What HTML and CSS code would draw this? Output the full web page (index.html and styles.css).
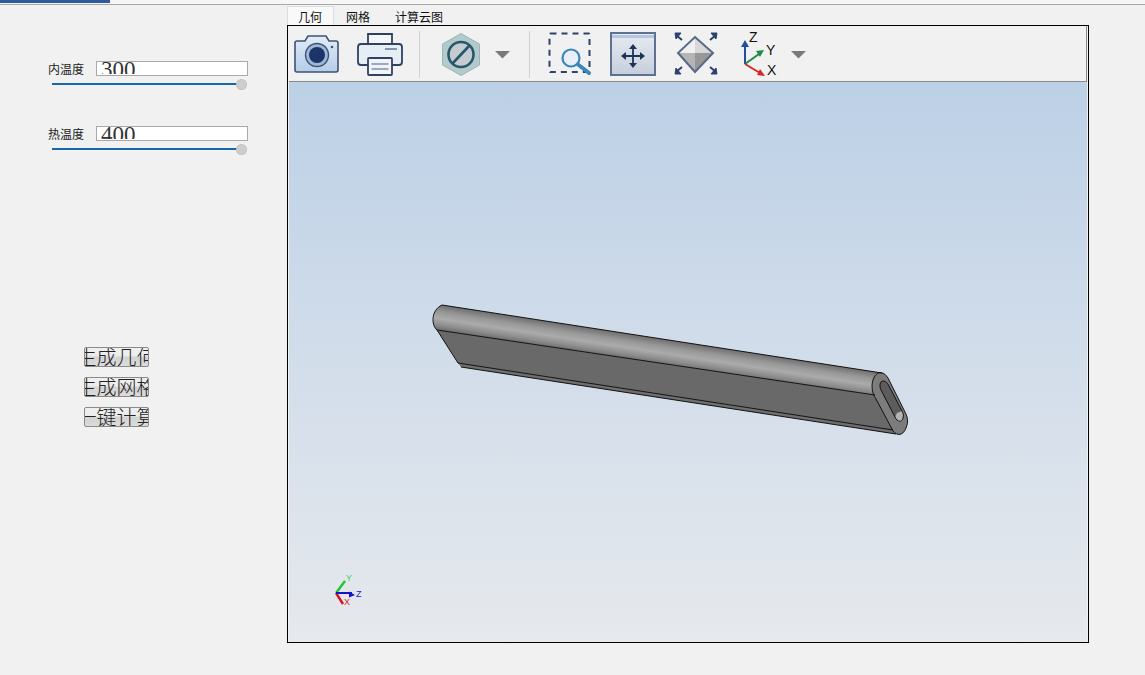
FILE: index.html
```html
<!DOCTYPE html>
<html lang="zh">
<head>
<meta charset="utf-8">
<title>几何</title>
<link rel="stylesheet" href="styles.css">
</head>
<body>
<div class="topbar"><div class="progress"></div></div>
<div class="main">
  <aside class="side">
    <div class="group">
      <div class="field"><span class="label">内温度</span><div class="value"><span class="value-text">300</span></div></div>
      <div class="slider"><div class="thumb"></div></div>
    </div>
    <div class="group">
      <div class="field"><span class="label">热温度</span><div class="value"><span class="value-text">400</span></div></div>
      <div class="slider"><div class="thumb"></div></div>
    </div>
    <div class="actions">
      <div class="btn"><span>生成几何</span></div>
      <div class="btn"><span>生成网格</span></div>
      <div class="btn"><span>一键计算</span></div>
    </div>
  </aside>
  <section class="work">
    <div class="tabs">
      <div class="tab tab-active">几何</div>
      <div class="tab">网格</div>
      <div class="tab tab-last">计算云图</div>
    </div>
    <div class="frame">
      <div class="toolbar">
        <svg width="57" height="50" viewBox="292 28 57 50">
          <defs><linearGradient id="cam" x1="0" y1="0" x2="0" y2="1"><stop offset="0" stop-color="#e2ecf7"/><stop offset="1" stop-color="#b4cde8"/></linearGradient></defs>
          <path d="M297 41h8l3-5h18l3 5h7a2 2 0 0 1 2 2v27a2 2 0 0 1-2 2h-39a2 2 0 0 1-2-2v-27a2 2 0 0 1 2-2z" fill="url(#cam)" stroke="#3f5272" stroke-width="1.6"/>
          <circle cx="317" cy="55" r="11.5" fill="#9db8d8" stroke="#3f5272" stroke-width="1.4"/>
          <circle cx="317" cy="55" r="8" fill="#1c3468"/>
          <circle cx="332" cy="47" r="1.3" fill="#3f5272"/>
        </svg>
        <svg width="61" height="50" viewBox="349 28 61 50">
          <path d="M368 44V34h24v10" fill="#f4f6f9" stroke="#2f4262" stroke-width="1.8"/>
          <path d="M361 44h38a3 3 0 0 1 3 3v15a3 3 0 0 1-3 3h-38a3 3 0 0 1-3-3v-15a3 3 0 0 1 3-3z" fill="#e6edf5" stroke="#2f4262" stroke-width="1.8"/>
          <path d="M385 49h12" stroke="#8194ad" stroke-width="2"/>
          <rect x="368" y="58" width="24" height="17" rx="1" fill="#f0f4f9" stroke="#2f4262" stroke-width="1.8"/>
          <path d="M371.500 64h17M371.500 69h17" stroke="#7e90a8" stroke-width="1.6"/>
        </svg>
        <div class="sep"></div>
        <svg width="59" height="50" viewBox="428 28 59 50">
          <path d="M461 33.500l18.500 10.500v21L461 75.500 442.500 65V44z" fill="#b3c9cb" stroke="#9ab6b9" stroke-width="1"/>
          <circle cx="461" cy="54.500" r="12.500" fill="#c4ccd2" stroke="#26586a" stroke-width="2.600"/>
          <path d="M452.500 63.500l17-18" stroke="#26586a" stroke-width="2.600"/>
        </svg>
        <svg class="caret" width="33" height="50" viewBox="487 28 33 50"><path d="M495 51h15l-7.500 7.500z" fill="#7a7a7a"/></svg>
        <div class="sep"></div>
        <svg width="63" height="50" viewBox="538 28 63 50">
          <rect x="549.500" y="33.500" width="40" height="38.500" rx="1" fill="none" stroke="#2d4468" stroke-width="2" stroke-dasharray="6 5"/>
          <circle cx="571" cy="58" r="8.500" fill="#e8eff6" stroke="#3c86ba" stroke-width="2.200"/>
          <path d="M578 64.500l11 8.500" stroke="#3c86ba" stroke-width="4" stroke-linecap="round"/>
        </svg>
        <svg width="64" height="50" viewBox="601 28 64 50">
          <defs><linearGradient id="win" x1="0" y1="0" x2="0" y2="1"><stop offset="0" stop-color="#e6ebf1"/><stop offset="1" stop-color="#c5cfdc"/></linearGradient></defs>
          <rect x="611" y="33" width="44" height="42" fill="url(#win)" stroke="#5f7190" stroke-width="2"/>
          <rect x="612" y="35" width="42" height="3" fill="#b4c6e0"/>
          <path d="M633 48v16M625 56h16" stroke="#1f3358" stroke-width="1.800"/>
          <path d="M633 44l-4 5h8zM633 68l-4-5h8zM621 56l5-4v8zM645 56l-5-4v8z" fill="#1f3358"/>
        </svg>
        <svg width="63" height="50" viewBox="665 28 63 50">
          <path d="M678 53l17-16 18 16z" fill="#f0f0f0"/>
          <path d="M695 37l18 16h-18z" fill="#d8d8d8"/>
          <path d="M678 53h17v19z" fill="#b5b5b5"/>
          <path d="M695 53h18l-18 19z" fill="#979797"/>
          <path d="M695 37l18 16-18 19-17-19z" fill="none" stroke="#59698a" stroke-width="2"/>
          <path d="M676 35l6 5M716 35l-6 5M676 72l6-5M716 72l-6-5" stroke="#2b426c" stroke-width="2"/>
          <path d="M675 33h6l-5 6zM717 33h-6l5 6zM675 74h6l-5-6zM717 74h-6l5-6z" fill="#2b426c" stroke="#2b426c"/>
        </svg>
        <svg width="57" height="50" viewBox="728 28 57 50">
          <path d="M745 64V46" stroke="#1f4fa0" stroke-width="2"/>
          <path d="M745 40l-4 7h8z" fill="#1f4fa0"/>
          <path d="M745 64l14-10" stroke="#1d8a45" stroke-width="2"/>
          <path d="M764 50l-8 1 4 6z" fill="#1d8a45"/>
          <path d="M745 64l15 9" stroke="#d9262a" stroke-width="2"/>
          <path d="M765 76l-8-1 3-6z" fill="#d9262a"/>
          <text class="axis-text" x="749" y="42">Z</text>
          <text class="axis-text" x="766" y="55">Y</text>
          <text class="axis-text" x="767" y="75">X</text>
        </svg>
        <svg class="caret" width="27" height="50" viewBox="785 28 27 50"><path d="M791 51h15l-7.500 7.500z" fill="#7a7a7a"/></svg>
      </div>
      <div class="viewport">
        <svg class="scene" width="798" height="560" viewBox="289 82 798 560">
          <defs>
            <linearGradient id="tube" gradientUnits="userSpaceOnUse" x1="660" y1="338" x2="656" y2="364">
              <stop offset="0" stop-color="#6a6a6a"/>
              <stop offset=".3" stop-color="#989898"/>
              <stop offset=".55" stop-color="#ababab"/>
              <stop offset=".8" stop-color="#8c8c8c"/>
              <stop offset="1" stop-color="#686868"/>
            </linearGradient>
          </defs>
          <path d="M458 363L893 430 896 434 461 367z" fill="#6e6e6e"/>
          <path d="M437 330L875 395 893 430 458 363z" fill="#696969"/>
          <path d="M442 305L882 373C875 375 871 382 872 390L875 395 437 330C431 325 431 310 442 305z" fill="url(#tube)"/>
          <path d="M882 373C877 371 872 378 872 386 872 392 874 396 876 399L893 431C897 436 903 436 906 428 909 421 907 416 905 412L888 378C886 375 884 373 882 373z" fill="#7c7c7c"/>
          <path d="M883 381C880 381 879 386 881 390L895 417C897 422 902 423 903 418 904 415 903 413 902 411L889 386C887 382 885 381 883 381z" fill="#5c5c5c"/>
          <path d="M895 417L897 413 902 411C904 415 904 418 902 421 899 423 897 421 895 417z" fill="#b4b4b4"/>
          <g class="edges">
            <path d="M442 305L882 373"/>
            <path d="M442 305C431 310 431 325 437 330L875 395"/>
            <path d="M437 330L458 363 893 430"/>
            <path d="M461 367L896 434"/>
            <path d="M882 373C877 371 872 378 872 386 872 392 874 396 876 399L893 431C897 436 903 436 906 428 909 421 907 416 905 412L888 378C886 375 884 373 882 373z"/>
            <path d="M883 381C880 381 879 386 881 390L895 417C897 422 902 423 903 418 904 415 903 413 902 411L889 386C887 382 885 381 883 381z"/>
          </g>
          <path d="M336 593l9-12" stroke="#22c32e" stroke-width="2.400"/>
          <path d="M336 593l7 11" stroke="#d6141c" stroke-width="2.400"/>
          <path d="M336 593h16" stroke="#1414c8" stroke-width="2"/>
          <path d="M355 595l-6-3.500v6z" fill="#1414c8"/>
          <text class="tri tri-y" x="346" y="581">Y</text>
          <text class="tri tri-z" x="356" y="597">Z</text>
          <text class="tri tri-x" x="344" y="605">X</text>
        </svg>
      </div>
    </div>
  </section>
</div>
</body>
</html>
```
FILE: styles.css
```css
* { box-sizing: border-box; }
html, body { margin: 0; padding: 0; height: 100%; }
body {
  background: #f1f1f1;
  overflow: hidden;
  font-family: "Noto Sans CJK SC", sans-serif;
  color: #111;
}
.topbar {
  height: 5px;
  background: #f6f6f6;
  border-bottom: 1px solid #a8a8a8;
}
.progress { width: 110px; height: 3px; background: #2f5a9e; }
.main { display: flex; }
.side { width: 287px; flex: none; padding-top: 56px; }
.group { height: 65px; }
.field { display: flex; align-items: center; height: 15px; margin-left: 48px; }
.label { width: 48px; font-size: 12px; line-height: 15px; color: #222; }
.value {
  width: 152px;
  height: 15px;
  overflow: hidden;
  background: #fff;
  border: 1px solid #a9a9a9;
  padding-left: 4px;
  font-family: "Liberation Serif", serif;
  font-size: 23px;
  line-height: 15px;
  color: #333;
}
.value-text { display: block; height: 12px; overflow: hidden; }
.slider {
  position: relative;
  width: 189px;
  height: 2px;
  margin: 7px 0 0 52px;
  background: #1a67a8;
}
.thumb {
  position: absolute;
  right: -6px;
  top: -4px;
  width: 11px;
  height: 11px;
  border-radius: 50%;
  background: #cdcdcd;
  border: 1px dotted #b5b5b5;
}
.actions {
  display: flex;
  flex-direction: column;
  gap: 10px;
  margin: 156px 0 0 84px;
}
.btn {
  display: flex;
  justify-content: center;
  width: 65px;
  height: 20px;
  overflow: hidden;
  border: 1px solid #8a8a8a;
  border-radius: 2px;
  background: linear-gradient(#efefef 0, #ececec 45%, #d2d2d2 50%, #dcdcdc 100%);
  font-size: 20px;
  line-height: 18px;
  color: #222;
  font-weight: 300;
}
.btn span { flex: none; white-space: nowrap; }
.work { width: 802px; flex: none; padding-top: 1px; }
.tabs { display: flex; height: 19px; }
.tab { padding: 0 12px; font-size: 12px; line-height: 22px; height: 19px; overflow: hidden; color: #111; }
.tab-active {
  width: 47px;
  padding: 0 0 0 10px;
  background: #f9f9f9;
  border: 1px solid #dcdcdc;
  border-bottom: 0;
  line-height: 20px;
}
.tab-last { padding: 0 13px; }
.frame {
  height: 618px;
  border: 1px solid #000;
  padding-left: 1px;
  padding-right: 1px;
  display: flex;
  flex-direction: column;
}
.toolbar {
  display: flex;
  align-items: flex-start;
  height: 56px;
  flex: none;
  padding: 2px 0 0 3px;
  background: #f1f1f1;
  border-right: 1px solid #8a8a8a;
  border-bottom: 1px solid #8a8a8a;
}
.toolbar svg { display: block; flex: none; }
.sep { width: 1px; height: 47px; margin: 3px 8px 0 9px; background: #d0d0d0; flex: none; }
.axis-text { font-family: "Liberation Sans", sans-serif; font-size: 14px; fill: #111; }
.viewport {
  flex: 1;
  background: linear-gradient(#bcd0e6 0, #d0dcea 45%, #e6e9ed 100%);
  overflow: hidden;
}
.scene { display: block; }
.edges path { fill: none; stroke: #111; stroke-width: 1; }
.tri { font-family: "Liberation Sans", sans-serif; font-size: 9px; }
.tri-y { fill: #3fd24a; }
.tri-z { fill: #1a1ad0; }
.tri-x { fill: #d8262c; }
```
